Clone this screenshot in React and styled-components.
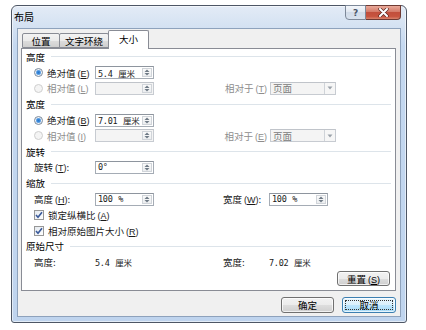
import React from 'react';
import styled, { createGlobalStyle } from 'styled-components';

const GlobalStyle = createGlobalStyle`
  html, body {
    margin: 0;
    padding: 0;
    background: #fff;
  }
  body {
    font-family: "Noto Sans CJK SC", "Liberation Sans", sans-serif;
    font-size: 9.5px;
    color: #1a1a1a;
  }
  * { box-sizing: border-box; }
`;

const Window = styled.div`
  margin: 5px 0 0 11px;
  width: 396px;
  height: 318px;
  border: 1px solid #4d5665;
  border-radius: 6px 6px 3px 3px;
  background: linear-gradient(#e3ebf6, #d3e1f2 22px, #c4d8f0 40px, #bfd4ee);
  display: flex;
  flex-direction: column;
  box-shadow: inset 0 0 0 1px rgba(255, 255, 255, 0.55);
`;

const TitleBar = styled.div`
  height: 22px;
  flex: none;
  display: flex;
  align-items: flex-start;
  justify-content: space-between;
  padding: 0 5px 0 2px;
`;

const Title = styled.span`
  line-height: 22px;
  font-size: 10px;
  color: #000;
`;

const CaptionButtons = styled.div`
  display: flex;
  margin-top: -1px;
`;

const CaptionButton = styled.div`
  width: ${(p) => (p.$close ? 35 : 21)}px;
  height: 15px;
  display: flex;
  align-items: center;
  justify-content: center;
  border: 1px solid ${(p) => (p.$close ? '#6e3a33' : '#7d8898')};
  border-left-width: ${(p) => (p.$close ? 0 : 1)}px;
  border-radius: ${(p) => (p.$close ? '0 0 4px 0' : '0 0 0 4px')};
  background: ${(p) =>
    p.$close
      ? 'linear-gradient(#e9a99a, #d47a68 45%, #c24f3c 50%, #c7543f 80%, #d9826b)'
      : 'linear-gradient(#f4f7fb, #e1e8f1 45%, #d1dbe8 50%, #d8e2ee)'};
  color: #4a5668;
  font-family: "DejaVu Sans", sans-serif;
  font-size: 9px;
  font-weight: bold;
`;

const Frame = styled.div`
  flex: 1;
  display: flex;
  padding: 0 5px 5px;
`;

const Client = styled.div`
  flex: 1;
  border: 1px solid #8ea2bc;
  background: #f0f0f0;
  padding: 1px 4px 3px 3px;
  display: flex;
  flex-direction: column;
`;

const TabStrip = styled.div`
  height: 18px;
  display: flex;
  align-items: flex-end;
  padding-left: 1px;
`;

const Tab = styled.div`
  width: ${(p) => p.$w}px;
  height: ${(p) => (p.$active ? 19 : 15)}px;
  margin-bottom: ${(p) => (p.$active ? -1 : 0)}px;
  margin-left: ${(p) => (p.$first ? 0 : -1)}px;
  border: 1px solid #898c95;
  border-bottom: ${(p) => (p.$active ? 'none' : '1px solid #898c95')};
  border-radius: 2px 2px 0 0;
  background: ${(p) =>
    p.$active ? '#fff' : 'linear-gradient(#f3f3f3, #ebebeb 50%, #dddddd 51%, #cfcfcf)'};
  display: flex;
  align-items: center;
  justify-content: center;
  position: relative;
  z-index: ${(p) => (p.$active ? 2 : 1)};
  color: #000;
  padding-bottom: ${(p) => (p.$active ? 2 : 0)}px;
`;

const Panel = styled.div`
  height: 243px;
  flex: none;
  border: 1px solid #898c95;
  background: #fff;
  display: flex;
  flex-direction: column;
  padding-right: 4px;
`;

const Section = styled.div`
  height: 15.8px;
  display: flex;
  align-items: center;
  padding-left: 4px;
  gap: 6px;
  color: #000;
  &::after {
    content: '';
    flex: 1;
    height: 1px;
    background: #dde4ea;
  }
`;

const Row = styled.div`
  height: 15.8px;
  display: flex;
  align-items: center;
  padding-left: 12px;
`;

const Cell = styled.div`
  width: ${(p) => (p.$w ? `${p.$w}px` : 'auto')};
  flex: none;
  display: flex;
  align-items: center;
  justify-content: ${(p) => (p.$right ? 'flex-end' : 'flex-start')};
  padding-right: ${(p) => (p.$right ? 3 : 0)}px;
  color: ${(p) => (p.$disabled ? '#8d8d8d' : '#1a1a1a')};
  white-space: nowrap;
  gap: 4px;
`;

const Radio = styled.span`
  width: 9px;
  height: 9px;
  border-radius: 50%;
  flex: none;
  border: 1px solid ${(p) => (p.$disabled ? '#cfcfcf' : '#7b8a9c')};
  background: ${(p) =>
    p.$checked
      ? 'radial-gradient(circle, #2a76c6 0, #3d8de0 1.6px, #9dc4ea 2.6px, #f1f4f8 3px)'
      : p.$disabled
      ? '#f4f4f4'
      : 'radial-gradient(circle, #e7eaee, #fff)'};
`;

const CheckBox = styled.span`
  width: 10px;
  height: 10px;
  flex: none;
  border: 1px solid #979797;
  background: linear-gradient(135deg, #e4e9ef, #fff);
  display: flex;
  align-items: center;
  justify-content: center;
`;

const InputBox = styled.div`
  width: ${(p) => p.$w || 59}px;
  height: 13px;
  border: 1px solid ${(p) => (p.$disabled ? '#c7cbd1' : '#a5acb5')};
  border-top-color: ${(p) => (p.$disabled ? '#c0c4ca' : '#8e959e')};
  background: ${(p) => (p.$disabled ? '#f4f4f4' : '#fff')};
  display: flex;
  align-items: center;
  justify-content: space-between;
  padding: 0 1px 0 2px;
  color: ${(p) => (p.$disabled ? '#7a7a7a' : '#1a1a1a')};
`;

const Spin = styled.span`
  width: 10px;
  height: 9px;
  border: 1px solid #d0d4d9;
  background: linear-gradient(#fafafa, #eceef0);
  display: flex;
  align-items: center;
  justify-content: center;
`;

const DropBtn = styled.span`
  width: 11px;
  height: 11px;
  border-left: 1px solid #cfd3d8;
  background: #f6f6f6;
  display: flex;
  align-items: center;
  justify-content: center;
  margin-right: -1px;
`;

const Value = styled.span`
  font-family: "DejaVu Sans Mono", "Noto Sans CJK SC", monospace;
  font-size: 8.5px;
  letter-spacing: -0.3px;
  word-spacing: 1px;
`;

const KeyText = styled.span`
  margin-left: 2px;
  font-family: "Liberation Sans", "Noto Sans CJK SC", sans-serif;
  font-size: 9px;
  color: inherit;
`;

const ResetRow = styled.div`
  display: flex;
  justify-content: flex-end;
  margin-top: 1px;
  padding-right: 1px;
`;

const Button = styled.div`
  width: ${(p) => p.$w}px;
  height: ${(p) => p.$h || 16}px;
  border: 1px solid ${(p) => (p.$default ? '#3c7fb1' : '#707070')};
  border-radius: 3px;
  background: ${(p) =>
    p.$default
      ? 'linear-gradient(#eaf6fd, #d9f0fc 50%, #bee6fd 51%, #a7d9f5)'
      : 'linear-gradient(#f2f2f2, #ebebeb 50%, #dddddd 51%, #cfcfcf)'};
  box-shadow: inset 0 0 0 1px rgba(255, 255, 255, 0.7);
  display: flex;
  align-items: center;
  justify-content: center;
  padding: 2px;
  color: #000;
`;

const FocusRect = styled.span`
  flex: 1;
  align-self: stretch;
  border: 1px dotted #333;
  display: flex;
  align-items: center;
  justify-content: center;
`;

const ButtonBar = styled.div`
  display: flex;
  justify-content: flex-end;
  gap: 8px;
  margin-top: 6px;
`;

const SpinArrows = () => (
  <svg width="6" height="7" viewBox="0 0 6 7">
    <path d="M3 0.5 L5.5 3 L0.5 3 Z" fill="#6f7a86" />
    <path d="M3 6.5 L5.5 4 L0.5 4 Z" fill="#6f7a86" />
  </svg>
);

const DownArrow = () => (
  <svg width="6" height="4" viewBox="0 0 6 4">
    <path d="M0.5 0.5 L5.5 0.5 L3 3.5 Z" fill="#9aa1a9" />
  </svg>
);

const Check = () => (
  <svg width="8" height="8" viewBox="0 0 8 8">
    <path d="M1 4 L3 6.3 L7 1.2" fill="none" stroke="#3a5a9a" strokeWidth="1.6" />
  </svg>
);

const CloseGlyph = () => (
  <svg width="11" height="9" viewBox="0 0 11 9">
    <path d="M2 1 L9 8 M9 1 L2 8" stroke="#5a2a24" strokeWidth="3.4" strokeLinecap="round" />
    <path d="M2 1 L9 8 M9 1 L2 8" stroke="#fff" strokeWidth="2" strokeLinecap="round" />
  </svg>
);

const Input = ({ value, disabled, w }) => (
  <InputBox $disabled={disabled} $w={w}>
    <Value>{value}</Value>
    <Spin>
      <SpinArrows />
    </Spin>
  </InputBox>
);

const Select = ({ value }) => (
  <InputBox $disabled $w={66}>
    <span>{value}</span>
    <DropBtn>
      <DownArrow />
    </DropBtn>
  </InputBox>
);

// label text with an underlined access key, e.g. 绝对值(E)
const Label = ({ text, k, colon }) => (
  <span>
    {text}
    <KeyText>
      (<u>{k}</u>)
    </KeyText>
    {colon ? ':' : ''}
  </span>
);

const App = () => (
  <>
    <GlobalStyle />
    <Window>
      <TitleBar>
        <Title>布局</Title>
        <CaptionButtons>
          <CaptionButton>?</CaptionButton>
          <CaptionButton $close>
            <CloseGlyph />
          </CaptionButton>
        </CaptionButtons>
      </TitleBar>
      <Frame>
        <Client>
          <TabStrip>
            <Tab $w={38} $first>位置</Tab>
            <Tab $w={50}>文字环绕</Tab>
            <Tab $w={41} $active>大小</Tab>
          </TabStrip>
          <Panel>
            <Section>高度</Section>
            <Row>
              <Cell $w={61}>
                <Radio $checked />
                <Label text="绝对值" k="E" />
              </Cell>
              <Cell $w={128}>
                <Input value="5.4 厘米" />
              </Cell>
            </Row>
            <Row>
              <Cell $w={61} $disabled>
                <Radio $disabled />
                <Label text="相对值" k="L" />
              </Cell>
              <Cell $w={128}>
                <Input disabled value="" />
              </Cell>
              <Cell $w={47} $right $disabled>
                <Label text="相对于" k="T" />
              </Cell>
              <Cell>
                <Select value="页面" />
              </Cell>
            </Row>
            <Section>宽度</Section>
            <Row>
              <Cell $w={61}>
                <Radio $checked />
                <Label text="绝对值" k="B" />
              </Cell>
              <Cell $w={128}>
                <Input value="7.01 厘米" />
              </Cell>
            </Row>
            <Row>
              <Cell $w={61} $disabled>
                <Radio $disabled />
                <Label text="相对值" k="I" />
              </Cell>
              <Cell $w={128}>
                <Input disabled value="" />
              </Cell>
              <Cell $w={47} $right $disabled>
                <Label text="相对于" k="E" />
              </Cell>
              <Cell>
                <Select value="页面" />
              </Cell>
            </Row>
            <Section>旋转</Section>
            <Row>
              <Cell $w={61}>
                <Label text="旋转" k="T" colon />
              </Cell>
              <Cell $w={128}>
                <Input value="0°" />
              </Cell>
            </Row>
            <Section>缩放</Section>
            <Row>
              <Cell $w={61}>
                <Label text="高度" k="H" colon />
              </Cell>
              <Cell $w={128}>
                <Input value="100 %" />
              </Cell>
              <Cell $w={46}>
                <Label text="宽度" k="W" colon />
              </Cell>
              <Cell>
                <Input value="100 %" />
              </Cell>
            </Row>
            <Row>
              <Cell>
                <CheckBox>
                  <Check />
                </CheckBox>
                <Label text="锁定纵横比" k="A" />
              </Cell>
            </Row>
            <Row>
              <Cell>
                <CheckBox>
                  <Check />
                </CheckBox>
                <Label text="相对原始图片大小" k="R" />
              </Cell>
            </Row>
            <Section>原始尺寸</Section>
            <Row>
              <Cell $w={61}>高度:</Cell>
              <Cell $w={128}>
                <Value>5.4 厘米</Value>
              </Cell>
              <Cell $w={46}>宽度:</Cell>
              <Cell>
                <Value>7.02 厘米</Value>
              </Cell>
            </Row>
            <ResetRow>
              <Button $w={53} $h={15}>
                <Label text="重置" k="S" />
              </Button>
            </ResetRow>
          </Panel>
          <ButtonBar>
            <Button $w={53}>确定</Button>
            <Button $w={54} $default>
              <FocusRect>取消</FocusRect>
            </Button>
          </ButtonBar>
        </Client>
      </Frame>
    </Window>
  </>
);

export default App;
